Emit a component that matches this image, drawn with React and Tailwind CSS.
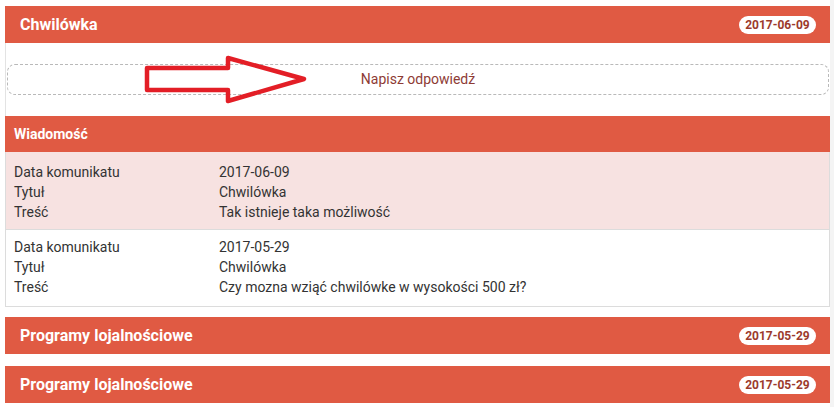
export default function App() {
  const font = { fontFamily: 'Roboto, "Liberation Sans", sans-serif' }
  const rows = [
    { date: '2017-06-09', title: 'Chwilówka', body: 'Tak istnieje taka możliwość', pink: true },
    { date: '2017-05-29', title: 'Chwilówka', body: 'Czy mozna wziąć chwilówke w wysokości 500 zł?', pink: false },
  ]

  const Badge = ({ children }) => (
    <span className="h-[18px] w-[77px] rounded-full bg-white text-[#9c3a2c] text-[12px] font-bold flex items-center justify-center leading-none">
      {children}
    </span>
  )

  const Bar = ({ title, date, className = '' }) => (
    <div className={`h-[37px] bg-[#e05a43] flex items-center justify-between pl-[15px] pr-[14px] ${className}`}>
      <span className="text-white text-[16px] font-bold">{title}</span>
      <Badge>{date}</Badge>
    </div>
  )

  return (
    <div className="w-[834px] h-[407px] overflow-hidden bg-white flex" style={font}>
      <div className="w-[5px]" />
      <div className="w-[825px] pt-[6px]">
        <Bar title="Chwilówka" date="2017-06-09" />

        <div className="relative border-l border-[#e3e3e3] py-[21px]">
          <div className="h-[31px] ml-px mr-px border border-dashed border-[#b9b9b9] rounded-[8px] flex items-center justify-center text-[14px] text-[#8e3b35]">
            Napisz odpowiedź
          </div>
          <svg className="absolute left-[138px] top-[12px]" width="166" height="50" viewBox="0 0 166 50" fill="none">
            <path d="M3 13 L84 13 L84 3 L160 24 L84 46 L84 35 L3 35 Z" stroke="#e31e26" strokeWidth="4.5" strokeLinejoin="round" />
          </svg>
        </div>

        <div className="h-[36px] bg-[#e05a43] flex items-center pl-[9px]">
          <span className="text-white text-[14px] font-bold">Wiadomość</span>
        </div>

        <div className="border border-t-0 border-[#dcdcdc]">
          {rows.map((r, i) => (
            <div
              key={i}
              className={`pl-[8px] text-[14px] leading-[20px] text-[#333] ${r.pink ? 'bg-[#f7e2e1] border-b border-[#dcdcdc] pt-[10px] pb-[7px]' : 'bg-white pt-[7px] pb-[9px]'}`}
            >
              <div className="flex"><span className="w-[205px]">Data komunikatu</span><span>{r.date}</span></div>
              <div className="flex"><span className="w-[205px]">Tytuł</span><span>{r.title}</span></div>
              <div className="flex"><span className="w-[205px]">Treść</span><span>{r.body}</span></div>
            </div>
          ))}
        </div>

        <Bar title="Programy lojalnościowe" date="2017-05-29" className="mt-[10px]" />
        <Bar title="Programy lojalnościowe" date="2017-05-29" className="mt-[12px]" />
      </div>
      <div className="flex-1 bg-[#f4f4f4]" />
    </div>
  )
}
